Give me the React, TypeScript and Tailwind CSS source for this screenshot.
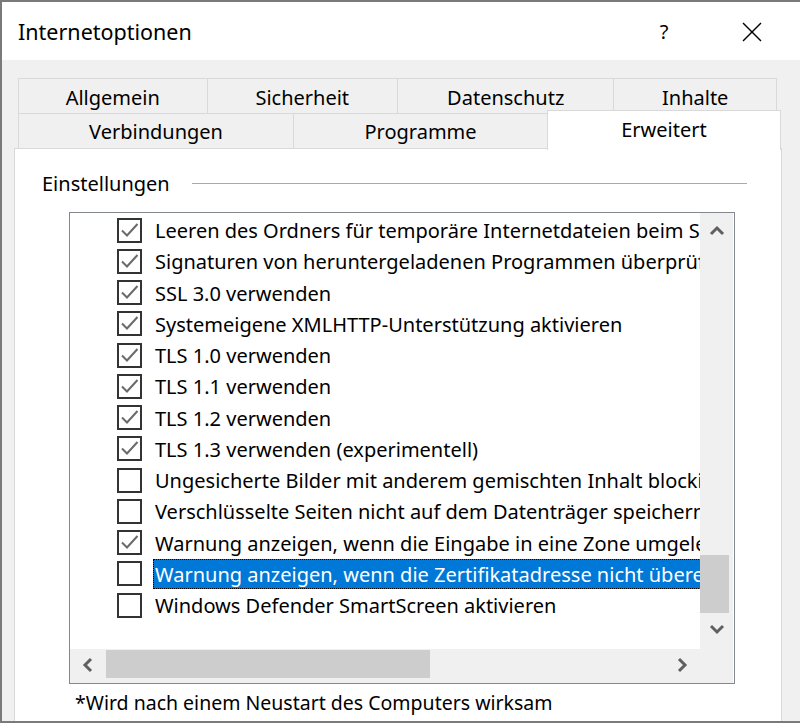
import React from 'react';

type Item = { label: string; checked: boolean; selected?: boolean };

const items: Item[] = [
  { label: 'Leeren des Ordners für temporäre Internetdateien beim Schließen des Browsers', checked: true },
  { label: 'Signaturen von heruntergeladenen Programmen überprüfen', checked: true },
  { label: 'SSL 3.0 verwenden', checked: true },
  { label: 'Systemeigene XMLHTTP-Unterstützung aktivieren', checked: true },
  { label: 'TLS 1.0 verwenden', checked: true },
  { label: 'TLS 1.1 verwenden', checked: true },
  { label: 'TLS 1.2 verwenden', checked: true },
  { label: 'TLS 1.3 verwenden (experimentell)', checked: true },
  { label: 'Ungesicherte Bilder mit anderem gemischten Inhalt blockieren', checked: false },
  { label: 'Verschlüsselte Seiten nicht auf dem Datenträger speichern', checked: false },
  { label: 'Warnung anzeigen, wenn die Eingabe in eine Zone umgeleitet wird', checked: true },
  { label: 'Warnung anzeigen, wenn die Zertifikatadresse nicht übereinstimmt*', checked: false, selected: true },
  { label: 'Windows Defender SmartScreen aktivieren', checked: false },
];

function Chevron({ dir }: { dir: 'up' | 'down' | 'left' | 'right' }) {
  const pts = {
    up: '2,9 8,3 14,9',
    down: '2,3 8,9 14,3',
    left: '9,2 3,8 9,14',
    right: '3,2 9,8 3,14',
  }[dir];
  const vertical = dir === 'up' || dir === 'down';
  return (
    <svg
      width={vertical ? 16 : 12}
      height={vertical ? 12 : 16}
      viewBox={vertical ? '0 0 16 12' : '0 0 12 16'}
      fill="none"
      stroke="#606060"
      strokeWidth="3"
    >
      <polyline points={pts} />
    </svg>
  );
}

function Checkbox({ checked }: { checked: boolean }) {
  return (
    <div className="w-[25px] h-[25px] border-2 border-[#333333] bg-white flex items-center justify-center shrink-0">
      {checked && (
        <svg width="21" height="21" viewBox="0 0 21 21" fill="none" stroke="#6a6a6a" strokeWidth="2">
          <polyline points="3,10.5 8,15.5 18.5,4" />
        </svg>
      )}
    </div>
  );
}

function Tab({ label, w, pad }: { label: string; w: string; pad: string }) {
  return (
    <div className={`${w} ${pad} h-full flex items-center justify-center border border-[#d9d9d9] -ml-px first:ml-0 bg-[#f0f0f0] text-black`}>
      {label}
    </div>
  );
}

export default function App() {
  return (
    <div className="w-[800px] h-[723px] overflow-hidden bg-[#f0f0f0] border-l-2 border-t-2 border-b-2 border-[#7a7a7a] font-['Noto_Sans',sans-serif] text-[20px] leading-none text-black">
      {/* Title bar */}
      <div className="h-[58px] bg-white flex items-center pl-[16px]">
        <span className="flex-1 text-[21.5px] pt-[2px]">Internetoptionen</span>
        <span className="w-[40px] text-center pt-[2px] mr-[58px]">?</span>
        <svg width="20" height="20" viewBox="0 0 20 20" stroke="#000" strokeWidth="1.5" className="mr-[38px] mt-[2px]">
          <line x1="1" y1="1" x2="19" y2="19" />
          <line x1="19" y1="1" x2="1" y2="19" />
        </svg>
      </div>

      <div className="pt-[18px] pl-[12px]">
        {/* Tab rows */}
        <div className="pl-[4px] h-[36px] flex w-[763px]">
          <Tab label="Allgemein" w="w-[190px]" pad="pt-[4px]" />
          <Tab label="Sicherheit" w="w-[192px]" pad="pt-[4px]" />
          <Tab label="Datenschutz" w="w-[218px]" pad="pt-[4px]" />
          <Tab label="Inhalte" w="w-[164px]" pad="pt-[4px]" />
        </div>
        <div className="pl-[4px] h-[36px] -mt-px flex items-end">
          <Tab label="Verbindungen" w="w-[276px]" pad="pt-[2px]" />
          <Tab label="Programme" w="w-[255px]" pad="pt-[2px]" />
          <div className="relative z-10 w-[234px] h-[40px] -ml-px -mb-px bg-white border border-b-0 border-[#d9d9d9] flex justify-center pt-[9px]">
            Erweitert
          </div>
        </div>

        {/* Panel */}
        <div className="w-[768px] h-[580px] bg-white border border-[#d9d9d9] -mt-px pl-[27px]">
          <div className="flex items-center h-[63px] pt-[6px]">
            <span>Einstellungen</span>
            <div className="ml-[22px] w-[555px] h-px bg-[#a9a9a9]" />
          </div>

          {/* Listbox */}
          <div className="ml-[27px] w-[666px] h-[472px] border border-[#828790] grid grid-cols-[630px_33px] grid-rows-[436px_34px]">
            <div className="overflow-hidden pt-[1.5px] relative">
              {items.map((it) => (
                <div key={it.label} className="h-[31.25px] flex items-center pl-[47px] whitespace-nowrap">
                  <Checkbox checked={it.checked} />
                  <span
                    className={
                      it.selected
                        ? 'ml-[11px] h-[30px] flex items-center px-[1px] pt-[2px] bg-[#0078d7] text-white border border-dotted border-black'
                        : 'ml-[11px] h-[30px] flex items-center px-[2px] pt-[2px]'
                    }
                  >
                    {it.label}
                  </span>
                </div>
              ))}
            </div>
            <div className="bg-[#f0f0f0] flex flex-col">
              <div className="h-[36px] flex items-center justify-center">
                <Chevron dir="up" />
              </div>
              <div className="flex-1 flex flex-col justify-end">
                <div className="h-[58px] w-[29px] bg-[#cdcdcd]" />
              </div>
              <div className="h-[36px] flex items-center justify-center pb-[4px]">
                <Chevron dir="down" />
              </div>
            </div>
            <div className="bg-[#f0f0f0] flex">
              <div className="w-[36px] flex items-center justify-center pb-[3px]">
                <Chevron dir="left" />
              </div>
              <div className="flex-1">
                <div className="w-[324px] h-[28px] mt-px bg-[#cdcdcd]" />
              </div>
              <div className="w-[36px] flex items-center justify-center pb-[3px]">
                <Chevron dir="right" />
              </div>
            </div>
            <div className="bg-[#f0f0f0]" />
          </div>

          <div className="ml-[33px] mt-[9px] text-[19.5px]">*Wird nach einem Neustart des Computers wirksam</div>
        </div>
      </div>
    </div>
  );
}
